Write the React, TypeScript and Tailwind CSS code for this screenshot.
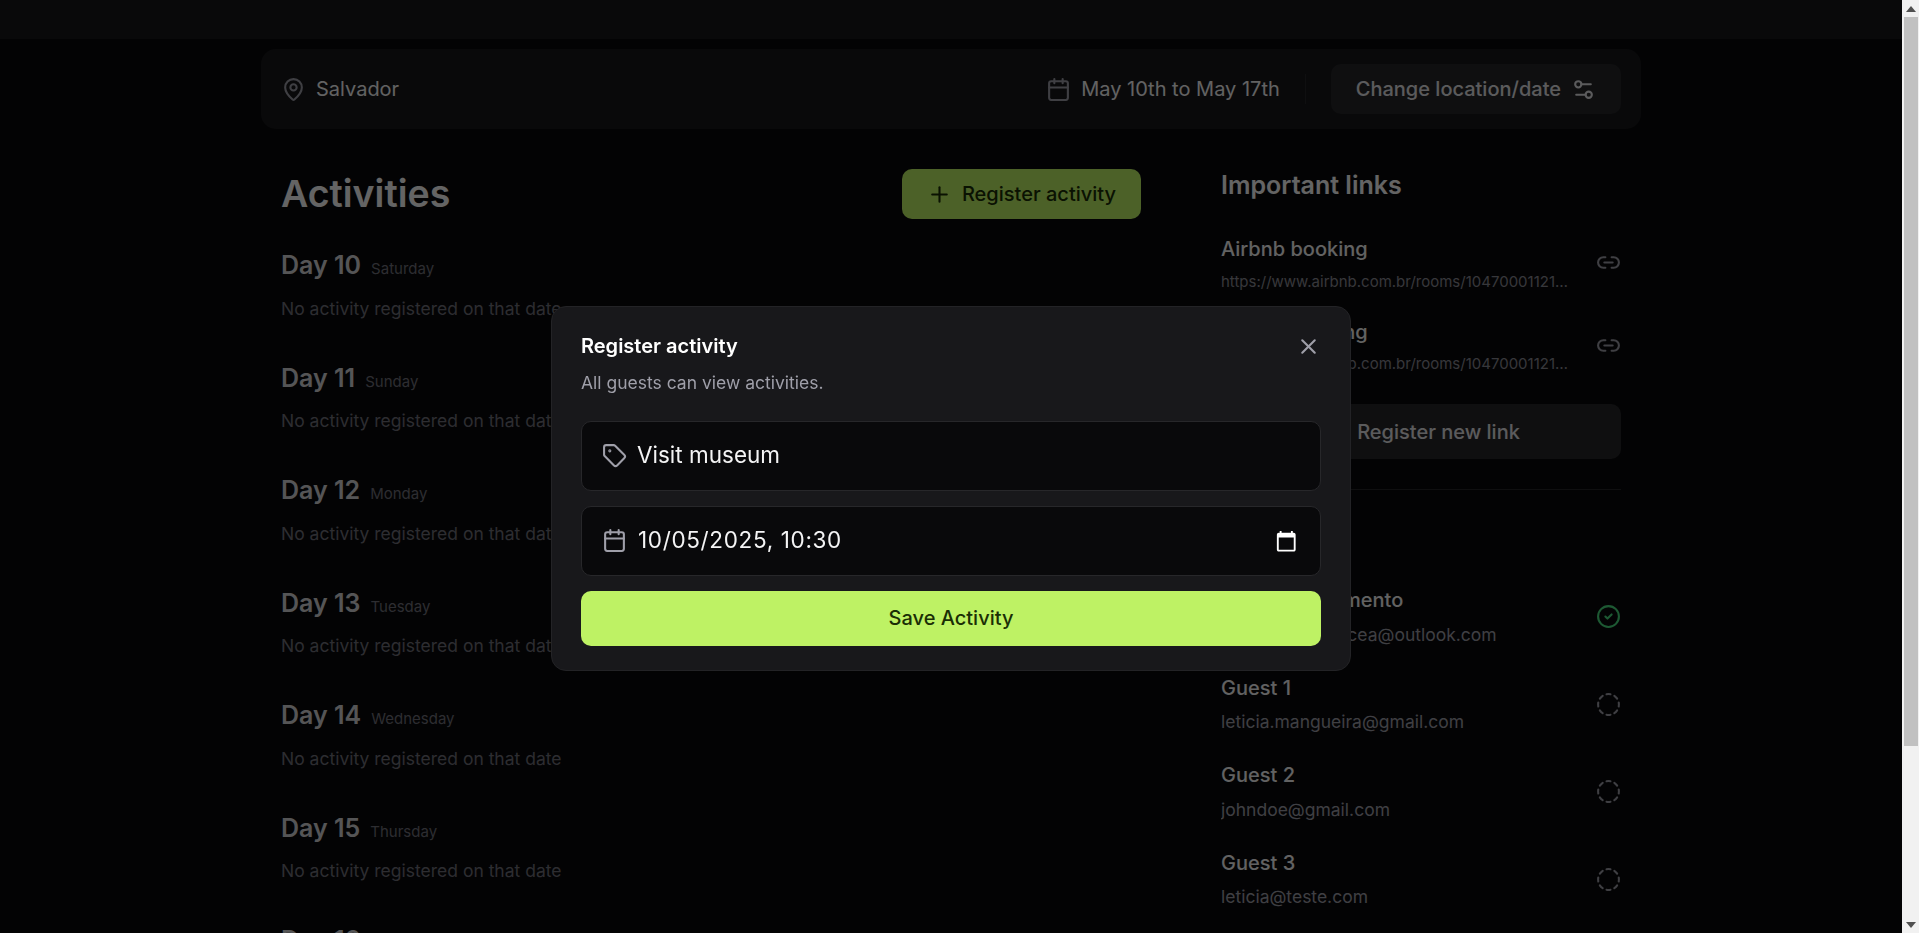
import { Calendar, Link2, MapPin, Plus, Settings2, Tag, X, CircleCheck, CircleDashed } from "lucide-react";

const days = [
  ["Day 10", "Saturday"],
  ["Day 11", "Sunday"],
  ["Day 12", "Monday"],
  ["Day 13", "Tuesday"],
  ["Day 14", "Wednesday"],
  ["Day 15", "Thursday"],
  ["Day 16", "Friday"],
  ["Day 17", "Saturday"],
];

const links = [
  ["Airbnb booking", "https://www.airbnb.com.br/rooms/104700011211234567890"],
  ["Airbnb booking", "https://www.airbnb.com.br/rooms/104700011211234567891"],
];

const guests: [string, string, boolean][] = [
  ["Leticia Nascimento", "leticiasarmentocea@outlook.com", true],
  ["Guest 1", "leticia.mangueira@gmail.com", false],
  ["Guest 2", "johndoe@gmail.com", false],
  ["Guest 3", "leticia@teste.com", false],
];

export default function App() {
  return (
    <div className="mr-[17px] min-h-[1150px] bg-zinc-950 font-['Inter',sans-serif] text-zinc-50">
      <div className="h-[39px] bg-zinc-900" />
      <main className="mx-auto mt-[10px] w-[1380px]">
        <div className="flex h-20 items-center justify-between rounded-[15px] bg-zinc-900 px-5">
          <div className="flex items-center gap-[10px]">
            <MapPin className="size-[25px] text-zinc-400" />
            <span className="text-[20px] text-zinc-100">Salvador</span>
          </div>
          <div className="flex items-center gap-[25px]">
            <div className="flex items-center gap-[10px]">
              <Calendar className="size-[25px] text-zinc-400" />
              <span className="text-[20px] text-zinc-100">May 10th to May 17th</span>
            </div>
            <div className="h-[30px] w-px bg-zinc-800" />
            <button className="flex h-[50px] items-center gap-[10px] rounded-[10px] bg-zinc-800 px-[25px] text-[20px] font-medium text-zinc-200">
              Change location/date
              <Settings2 className="size-[25px]" />
            </button>
          </div>
        </div>

        <div className="mt-10 flex gap-20 px-5">
          <div className="flex-1">
            <div className="flex h-[50px] items-center justify-between">
              <h1 className="text-[37.5px] font-semibold text-zinc-50">Activities</h1>
              <button className="flex h-[50px] items-center gap-[10px] rounded-[10px] bg-[#bef264] px-[25px] text-[20px] font-medium text-[#1a2e05]">
                <Plus className="size-[25px]" />
                Register activity
              </button>
            </div>
            <div className="mt-[29.4px] flex flex-col">
              {days.map(([day, week]) => (
                <div key={day} className="h-[112.5px]">
                  <div className="flex items-baseline gap-[10px]">
                    <span className="text-[25px] leading-[35px] font-semibold text-zinc-300">{day}</span>
                    <span className="text-[15px] leading-5 text-zinc-500">{week}</span>
                  </div>
                  <p className="mt-[12.3px] text-[17.5px] leading-[25px] text-zinc-500">
                    No activity registered on that date
                  </p>
                </div>
              ))}
            </div>
          </div>

          <aside className="w-[400px]">
            <h2 className="-mt-px text-[25px] leading-[35px] font-semibold text-zinc-50">Important links</h2>
            <div className="mt-[31px] flex flex-col gap-[25px]">
              {links.map(([name, url]) => (
                <div key={url} className="flex items-center justify-between gap-5">
                  <div className="flex max-w-[350px] min-w-0 flex-col gap-[7.5px]">
                    <span className="text-[20px] leading-[30px] font-medium text-zinc-100">{name}</span>
                    <span className="truncate text-[15px] leading-5 text-[#8a8a93]">{url}</span>
                  </div>
                  <Link2 className="size-[25px] shrink-0 text-zinc-400" />
                </div>
              ))}
            </div>
            <button className="mt-[30px] flex h-[55px] w-full items-center justify-center gap-[10px] rounded-[10px] bg-zinc-800 text-[20px] font-medium text-zinc-200">
              <Plus className="size-[25px]" />
              Register new link
            </button>
            <div className="my-[30px] h-px bg-zinc-800" />
            <h2 className="text-[25px] leading-[35px] font-semibold text-zinc-50">Guests</h2>
            <div className="mt-[30px] flex flex-col gap-[26px]">
              {guests.map(([name, mail, ok]) => (
                <div key={name} className="flex items-center justify-between gap-5">
                  <div className="flex min-w-0 flex-col gap-[6.5px]">
                    <span className="text-[20px] leading-[30px] font-medium text-zinc-100">{name}</span>
                    <span className="truncate text-[17.5px] leading-[25px] text-zinc-400">{mail}</span>
                  </div>
                  {ok ? (
                    <CircleCheck className="size-[25px] shrink-0 translate-y-px text-[#4ade80]" />
                  ) : (
                    <CircleDashed className="size-[25px] shrink-0 translate-y-px text-zinc-400" />
                  )}
                </div>
              ))}
            </div>
          </aside>
        </div>
      </main>

      <div className="fixed inset-y-0 right-[17px] left-0 flex items-start justify-center bg-black/60 pt-[306px]">
        <div className="flex w-[800px] flex-col rounded-[15px] border border-[#232326] bg-zinc-900 px-[29px] py-[24px] shadow-lg">
          <div className="flex items-center justify-between">
            <h3 className="text-[20px] leading-[30px] font-semibold text-white">Register activity</h3>
            <X className="size-[25px] text-zinc-400" />
          </div>
          <p className="mt-[8.5px] text-[17.5px] leading-[25px] text-zinc-400">All guests can view activities.</p>
          <div className="mt-[26.5px] flex h-[70px] items-center gap-[10px] rounded-[10px] border border-zinc-800 bg-zinc-950 px-5">
            <Tag className="size-[25px] -translate-y-px text-zinc-400" />
            <span className="-translate-y-px text-[22.5px] text-zinc-100">Visit museum</span>
          </div>
          <div className="mt-[15px] flex h-[70px] items-center gap-[10px] rounded-[10px] border border-zinc-800 bg-zinc-950 px-5">
            <Calendar className="size-[25px] -translate-y-px text-zinc-400" />
            <span className="ml-px flex-1 -translate-y-px text-[22.5px] tracking-[0.65px] text-zinc-100">10/05/2025, 10:30</span>
            <svg viewBox="0 0 24 24" className="mr-[3px] size-[22.5px] fill-white">
              <path d="M20 3h-1V1h-2v2H7V1H5v2H4c-1.1 0-2 .9-2 2v16c0 1.1.9 2 2 2h16c1.1 0 2-.9 2-2V5c0-1.1-.9-2-2-2zm0 18H4V8h16v13z" />
            </svg>
          </div>
          <button className="mt-[15px] h-[55px] rounded-[10px] bg-[#bef264] pb-px text-[20px] font-medium text-[#1a2e05]">
            Save Activity
          </button>
        </div>
      </div>

      <div className="fixed inset-y-0 right-0 flex w-[17px] flex-col bg-[#f1f1f1]">
        <div className="flex h-[17px] items-center justify-center">
          <svg viewBox="0 0 10 6" className="h-[6px] w-[10px] fill-[#505050]"><path d="M5 0l5 6H0z" /></svg>
        </div>
        <div className="ml-[2px] h-[729px] w-[14px] bg-[#c1c1c1]" />
        <div className="mt-auto flex h-[17px] items-center justify-center">
          <svg viewBox="0 0 10 6" className="h-[6px] w-[10px] fill-[#505050]"><path d="M5 6L0 0h10z" /></svg>
        </div>
      </div>
    </div>
  );
}
